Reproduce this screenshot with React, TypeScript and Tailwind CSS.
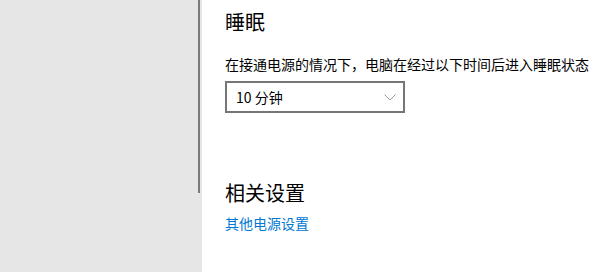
export default function App() {
  return (
    <div
      className="flex h-[272px] w-[600px] overflow-hidden bg-white text-black"
      style={{ fontFamily: '"Noto Sans CJK SC", "Microsoft YaHei", sans-serif' }}
    >
      {/* Sidebar with scrollbar */}
      <div className="flex w-[202px] shrink-0 justify-end bg-[#e6e6e6] pr-[2px]">
        <div className="h-[193px] w-[2px] bg-[#7a7a7a]" />
      </div>

      {/* Content */}
      <div className="flex flex-col pl-[23px] pt-[8px]">
        <h2 className="text-[20px] leading-[28px] font-normal">睡眠</h2>
        <p className="mt-[18px] text-[14px] leading-[20px]">
          在接通电源的情况下，电脑在经过以下时间后进入睡眠状态
        </p>
        <div className="mt-[7px] flex h-[32px] w-[180px] items-center justify-between border-2 border-[#767676] pl-[9px] pr-[7px]">
          <span className="text-[14px] leading-[20px]">10 分钟</span>
          <svg width="12" height="7" viewBox="0 0 12 7" fill="none" className="mt-[1px]">
            <path d="M0.5 0.5 L6 6 L11.5 0.5" stroke="#999999" strokeWidth="1" />
          </svg>
        </div>
        <h2 className="mt-[66px] text-[20px] leading-[28px] font-normal">相关设置</h2>
        <a href="#" className="mt-[6px] text-[14px] leading-[20px] text-[#0078d4]">
          其他电源设置
        </a>
      </div>
    </div>
  );
}
